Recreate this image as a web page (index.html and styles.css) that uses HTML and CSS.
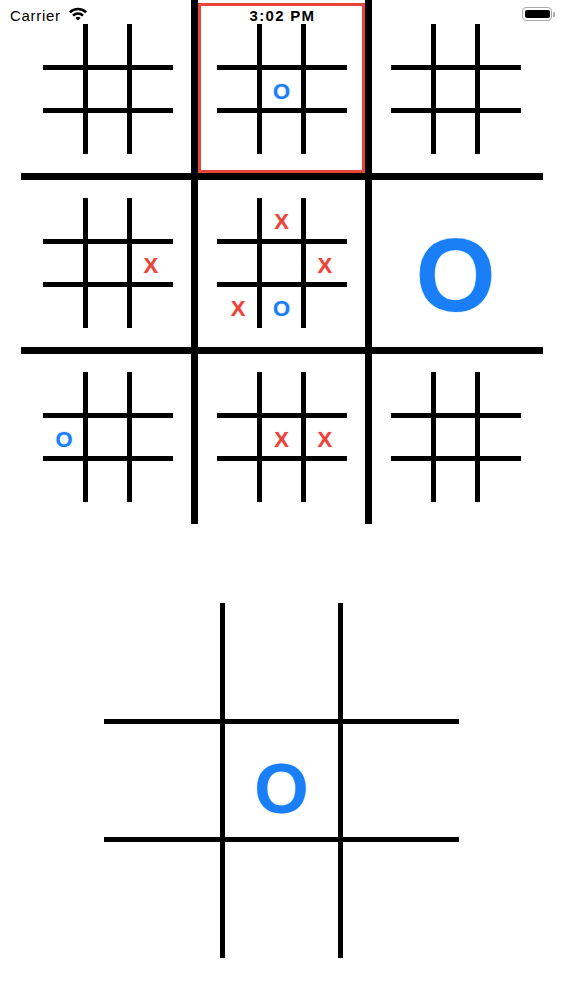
FILE: index.html
```html
<!DOCTYPE html>
<html lang="en">
<head>
<meta charset="utf-8">
<title>Ultimate Tic-Tac-Toe</title>
<link rel="stylesheet" href="styles.css">
</head>
<body>
<header class="status">
  <div class="status-left">
    <span class="carrier">Carrier</span>
    <svg class="wifi" viewBox="0 0 20 14" width="20" height="14" aria-hidden="true">
      <path d="M1.87 5.37 A11.5 11.5 0 0 1 18.13 5.37" fill="none" stroke="#000" stroke-width="2.6"/>
      <path d="M5.05 8.55 A7 7 0 0 1 14.95 8.55" fill="none" stroke="#000" stroke-width="2.6"/>
      <path d="M10 13.6 L7.4 11 A3.7 3.7 0 0 1 12.6 11 Z" fill="#000"/>
    </svg>
  </div>
  <div class="time">3:02 PM</div>
  <div class="status-right">
    <div class="battery">
      <div class="battery-body"><div class="battery-level"></div></div>
      <div class="battery-nub"></div>
    </div>
  </div>
</header>

<main class="page">
  <section class="board">
    <div class="cell">
      <div class="mini">
        <span class="sq"></span><span class="sq"></span><span class="sq"></span>
        <span class="sq"></span><span class="sq"></span><span class="sq"></span>
        <span class="sq"></span><span class="sq"></span><span class="sq"></span>
      </div>
    </div>
    <div class="cell active">
      <div class="mini">
        <span class="sq"></span><span class="sq"></span><span class="sq"></span>
        <span class="sq"></span><span class="sq o">O</span><span class="sq"></span>
        <span class="sq"></span><span class="sq"></span><span class="sq"></span>
      </div>
    </div>
    <div class="cell">
      <div class="mini">
        <span class="sq"></span><span class="sq"></span><span class="sq"></span>
        <span class="sq"></span><span class="sq"></span><span class="sq"></span>
        <span class="sq"></span><span class="sq"></span><span class="sq"></span>
      </div>
    </div>

    <div class="cell">
      <div class="mini">
        <span class="sq"></span><span class="sq"></span><span class="sq"></span>
        <span class="sq"></span><span class="sq"></span><span class="sq x">X</span>
        <span class="sq"></span><span class="sq"></span><span class="sq"></span>
      </div>
    </div>
    <div class="cell">
      <div class="mini">
        <span class="sq"></span><span class="sq x">X</span><span class="sq"></span>
        <span class="sq"></span><span class="sq"></span><span class="sq x">X</span>
        <span class="sq x">X</span><span class="sq o">O</span><span class="sq"></span>
      </div>
    </div>
    <div class="cell won">
      <span class="winner o">O</span>
    </div>

    <div class="cell">
      <div class="mini">
        <span class="sq"></span><span class="sq"></span><span class="sq"></span>
        <span class="sq o">O</span><span class="sq"></span><span class="sq"></span>
        <span class="sq"></span><span class="sq"></span><span class="sq"></span>
      </div>
    </div>
    <div class="cell">
      <div class="mini">
        <span class="sq"></span><span class="sq"></span><span class="sq"></span>
        <span class="sq"></span><span class="sq x">X</span><span class="sq x">X</span>
        <span class="sq"></span><span class="sq"></span><span class="sq"></span>
      </div>
    </div>
    <div class="cell">
      <div class="mini">
        <span class="sq"></span><span class="sq"></span><span class="sq"></span>
        <span class="sq"></span><span class="sq"></span><span class="sq"></span>
        <span class="sq"></span><span class="sq"></span><span class="sq"></span>
      </div>
    </div>
  </section>

  <section class="zoom-board">
    <span class="zsq"></span><span class="zsq"></span><span class="zsq"></span>
    <span class="zsq"></span><span class="zsq o">O</span><span class="zsq"></span>
    <span class="zsq"></span><span class="zsq"></span><span class="zsq"></span>
  </section>
</main>
</body>
</html>
```

FILE: styles.css
```css
* { box-sizing: border-box; }

html, body {
  margin: 0;
  padding: 0;
  background: #ffffff;
}

body {
  position: relative;
  width: 563px;
  min-height: 1000px;
  font-family: "Liberation Sans", Arial, sans-serif;
  color: #000;
}

/* ---------- status bar (overlays the board) ---------- */
.status {
  position: absolute;
  top: 0;
  left: 0;
  right: 0;
  z-index: 5;
  display: grid;
  grid-template-columns: 1fr auto 1fr;
  align-items: start;
  padding: 7px 8px 0 10px;
  font-size: 15px;
  line-height: 18px;
}

.status-left {
  display: flex;
  align-items: flex-start;
  gap: 7px;
}

.carrier {
  letter-spacing: 0.7px;
}

.wifi {
  display: block;
  margin-top: 0;
}

.time {
  font-weight: bold;
  letter-spacing: 1.3px;
}

.status-right {
  display: flex;
  justify-content: flex-end;
}

.battery {
  display: flex;
  align-items: center;
  height: 14px;
}

.battery-body {
  width: 30px;
  height: 13.5px;
  border: 1px solid #a9a9a9;
  border-radius: 4px;
  padding: 1.5px;
}

.battery-level {
  width: 100%;
  height: 100%;
  background: #000;
  border-radius: 2px;
}

.battery-nub {
  width: 1.8px;
  height: 5px;
  margin-left: 0.8px;
  background: #a9a9a9;
  border-radius: 0 1px 1px 0;
}

/* ---------- page ---------- */
.page {
  display: flex;
  flex-direction: column;
  align-items: center;
}

/* main 3x3 board with thick lines drawn as background bars */
.board {
  width: 522px;
  height: 524px;
  padding-top: 2px;
  display: grid;
  grid-template-columns: repeat(3, 174px);
  grid-template-rows: repeat(3, 174px);
  background:
    linear-gradient(#000, #000) 170.5px 0 / 7px 100% no-repeat,
    linear-gradient(#000, #000) 344.5px 0 / 7px 100% no-repeat,
    linear-gradient(#000, #000) 0 172.5px / 100% 7px no-repeat,
    linear-gradient(#000, #000) 0 346.5px / 100% 7px no-repeat;
}

.cell {
  display: flex;
  align-items: center;
  justify-content: center;
}

.cell.active {
  margin: 1px 3.5px 3.5px 3.5px;
  padding-top: 2.5px;
  border: 3px solid #e9443a;
}

/* small boards */
.mini {
  width: 130px;
  height: 130px;
  display: grid;
  grid-template-columns: repeat(3, 1fr);
  grid-template-rows: repeat(3, 1fr);
  background:
    linear-gradient(#000, #000) 40.8px 0 / 5px 100% no-repeat,
    linear-gradient(#000, #000) 84.2px 0 / 5px 100% no-repeat,
    linear-gradient(#000, #000) 0 40.8px / 100% 5px no-repeat,
    linear-gradient(#000, #000) 0 84.2px / 100% 5px no-repeat;
}

.sq {
  display: flex;
  align-items: center;
  justify-content: center;
  font-size: 22px;
  font-weight: bold;
  line-height: 1;
  padding-top: 0.25em;
}

.o {
  color: #1a7ff6;
  text-shadow: 0 0 2px rgba(26, 127, 246, 0.35);
}

.x {
  color: #e9443a;
  text-shadow: 0 0 2px rgba(233, 68, 58, 0.3);
}

.winner {
  font-size: 103px;
  font-weight: bold;
  line-height: 1;
  padding-top: 0.25em;
}

/* enlarged board below */
.zoom-board {
  margin-top: 79px;
  width: 355px;
  height: 355px;
  display: grid;
  grid-template-columns: repeat(3, 1fr);
  grid-template-rows: repeat(3, 1fr);
  background:
    linear-gradient(#000, #000) 115.8px 0 / 5px 100% no-repeat,
    linear-gradient(#000, #000) 234.2px 0 / 5px 100% no-repeat,
    linear-gradient(#000, #000) 0 115.8px / 100% 5px no-repeat,
    linear-gradient(#000, #000) 0 234.2px / 100% 5px no-repeat;
}

.zsq {
  display: flex;
  align-items: center;
  justify-content: center;
  font-size: 70px;
  font-weight: bold;
  line-height: 1;
  padding-top: 0.25em;
}
```
